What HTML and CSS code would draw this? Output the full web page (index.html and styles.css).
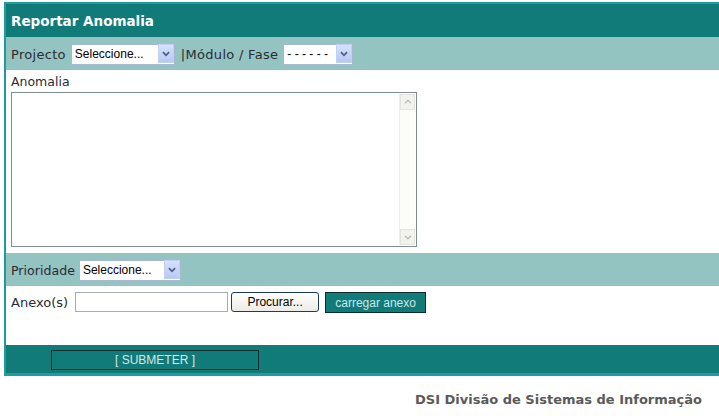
FILE: index.html
```html
<!DOCTYPE html>
<html lang="pt">
<head>
  <meta charset="UTF-8">
  <title>Reportar Anomalia</title>
  <link rel="stylesheet" href="styles.css">
</head>
<body>

<div class="panel">
  <div class="head">Reportar Anomalia</div>

  <div class="band">
    <span class="lbl proj">Projecto</span>
    <span class="pick pick-proj">
      <select><option>Seleccione...</option></select>
      <svg class="arrow" viewBox="0 0 16 19"><path d="M4.5 8 L8 11.5 L11.5 8" fill="none" stroke="#4d6185" stroke-width="2"/></svg>
    </span>
    <span class="lbl mod">|Módulo / Fase</span>
    <span class="pick pick-mod">
      <select><option>- - - - - -</option></select>
      <svg class="arrow" viewBox="0 0 16 19"><path d="M4.5 8 L8 11.5 L11.5 8" fill="none" stroke="#4d6185" stroke-width="2"/></svg>
    </span>
  </div>

  <div class="field">
    <div class="lbl">Anomalia</div>
    <div class="memo">
      <textarea></textarea>
      <div class="scroll">
        <span class="sbtn"><svg viewBox="0 0 16 16"><path d="M4.5 9.5 L8 6 L11.5 9.5" fill="none" stroke="#b9bcb0" stroke-width="1.5"/></svg></span>
        <span class="sbtn"><svg viewBox="0 0 16 16"><path d="M4.5 6.5 L8 10 L11.5 6.5" fill="none" stroke="#b9bcb0" stroke-width="1.5"/></svg></span>
      </div>
    </div>
  </div>

  <div class="band">
    <span class="lbl prio">Prioridade</span>
    <span class="pick pick-prio">
      <select><option>Seleccione...</option></select>
      <svg class="arrow" viewBox="0 0 16 19"><path d="M4.5 8 L8 11.5 L11.5 8" fill="none" stroke="#4d6185" stroke-width="2"/></svg>
    </span>
  </div>

  <div class="attach">
    <span class="lbl">Anexo(s)</span>
    <input type="text" class="file-name">
    <button class="browse">Procurar...</button>
    <button class="upload">carregar anexo</button>
  </div>

  <div class="foot">
    <button class="submit">[ SUBMETER ]</button>
  </div>
</div>

<p class="credit">DSI Divisão de Sistemas de Informação</p>

</body>
</html>
```

FILE: styles.css
```css
* { box-sizing: border-box; }
body { margin: 0; padding: 0; background: #fff; font-family: "DejaVu Sans", Verdana, sans-serif; color: #2b2b33; }

.panel { margin: 2px 0 0 4px; width: 730px; border-left: 2px solid #1d9d9b; border-top: 2px solid #1d9d9b; border-bottom: 3px solid #1d9d9b; }

.head { background: #107b79; color: #fff; font-weight: bold; font-size: 13.5px; height: 33px; line-height: 34px; padding-left: 5px; }

.lbl { font-size: 13px; }

.band { background: #93c4c2; height: 33px; display: flex; align-items: center; padding-left: 5px; gap: 5px; }
.band .lbl { padding-top: 2px; }
.band .proj { letter-spacing: 0.3px; }
.band .mod { margin-left: 1px; letter-spacing: 0.3px; }
.band .prio { font-size: 12.6px; margin-right: -1px; }

.pick { position: relative; display: inline-block; height: 21px; }
.pick select { appearance: none; -webkit-appearance: none; height: 21px; border: 1px solid #a8b9cf; background: #fff; font-family: "Liberation Sans", Arial, sans-serif; font-size: 12px; color: #000; padding: 0 0 0 3px; border-radius: 0; }
.pick .arrow { position: absolute; right: 1px; top: 1px; width: 16px; height: 19px; background: linear-gradient(#d6e1fb, #b7c9f2); border: 1px solid #c2d1f3; pointer-events: none; }
.pick-proj select { width: 104px; }
.pick-mod select { width: 70px; }
.pick-prio select { width: 102px; }

.field { padding: 4px 0 6px 5px; }
.field .lbl { margin-bottom: 3px; font-size: 12.5px; }
.memo { position: relative; width: 406px; height: 155px; }
.memo textarea { width: 100%; height: 100%; resize: none; border: 1px solid #7f8d99; display: block; }
.memo .scroll { position: absolute; top: 2px; right: 2px; bottom: 2px; width: 16px; background: #fcfcf9; border-left: 1px solid #efefea; display: flex; flex-direction: column; justify-content: space-between; }
.sbtn { height: 16px; background: #f3f3ee; border: 1px solid #e4e4dc; display: block; }
.sbtn svg { display: block; width: 14px; height: 14px; }

.attach { display: flex; padding: 6px 0 0 5px; height: 59px; align-items: flex-start; gap: 3px; }
.attach .lbl { padding-top: 3px; margin-right: 4px; }
.file-name { width: 153px; height: 20px; border: 1px solid #a5acb5; }
.browse { height: 20px; width: 88px; font-family: "Liberation Sans", Arial, sans-serif; font-size: 12px; color: #000; background: linear-gradient(#fff, #ecebe6); border: 1px solid #1f3a62; border-radius: 3px; padding: 0; }
.upload { height: 21px; width: 101px; margin-left: 3px; font-family: "Liberation Sans", Arial, sans-serif; font-size: 12px; color: #cfe6e6; background: #107b79; border: 1px solid #0b2d2d; padding: 0; }

.foot { background: #107b79; height: 28px; padding: 4px 0 0 45px; }
.submit { width: 208px; height: 20px; background: #107b79; border: 1px solid #0b2d2d; color: #d8e6e6; font-family: "Liberation Sans", Arial, sans-serif; font-size: 12px; padding: 0; }

.credit { margin: 16px 17px 0 0; text-align: right; font-size: 13px; font-weight: bold; color: #5a5a5a; }
```
